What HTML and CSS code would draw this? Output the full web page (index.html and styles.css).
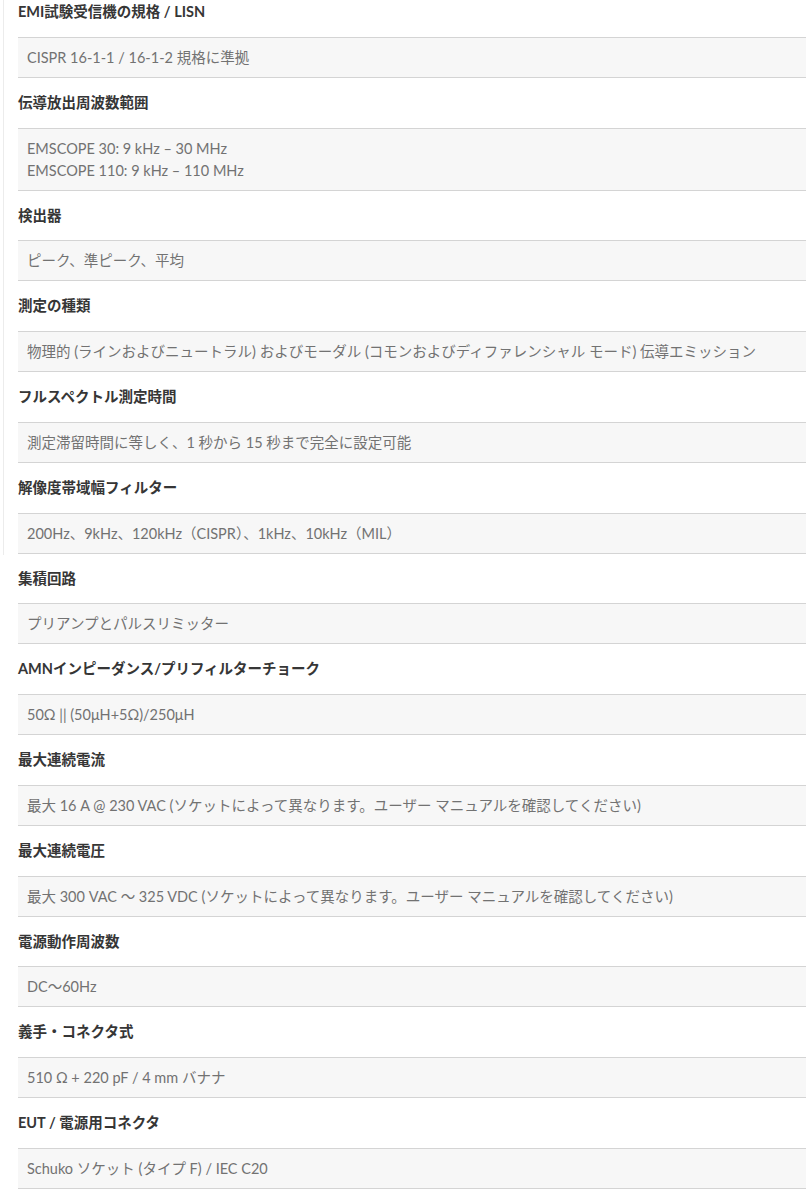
FILE: index.html
```html
<!DOCTYPE html>
<html lang="ja">
<head>
<meta charset="utf-8">
<title>Specs</title>
<link rel="stylesheet" href="styles.css">
</head>
<body>
<div class="page">
  <div class="edge"></div>
  <dl class="spec-list">
    <dt class="spec-head spec-head--first">EMI試験受信機の規格 / LISN</dt>
    <dd class="spec-val">CISPR 16-1-1 / 16-1-2 規格に準拠</dd>
    <dt class="spec-head">伝導放出周波数範囲</dt>
    <dd class="spec-val">EMSCOPE 30: 9 kHz – 30 MHz<br>EMSCOPE 110: 9 kHz – 110 MHz</dd>
    <dt class="spec-head">検出器</dt>
    <dd class="spec-val">ピーク、準ピーク、平均</dd>
    <dt class="spec-head">測定の種類</dt>
    <dd class="spec-val">物理的 (ラインおよびニュートラル) およびモーダル (コモンおよびディファレンシャル モード) 伝導エミッション</dd>
    <dt class="spec-head">フルスペクトル測定時間</dt>
    <dd class="spec-val">測定滞留時間に等しく、1 秒から 15 秒まで完全に設定可能</dd>
    <dt class="spec-head">解像度帯域幅フィルター</dt>
    <dd class="spec-val">200Hz、9kHz、120kHz（CISPR）、1kHz、10kHz（MIL）</dd>
    <dt class="spec-head">集積回路</dt>
    <dd class="spec-val">プリアンプとパルスリミッター</dd>
    <dt class="spec-head">AMNインピーダンス/プリフィルターチョーク</dt>
    <dd class="spec-val">50Ω || (50μH+5Ω)/250μH</dd>
    <dt class="spec-head">最大連続電流</dt>
    <dd class="spec-val">最大 16 A @ 230 VAC (ソケットによって異なります。ユーザー マニュアルを確認してください)</dd>
    <dt class="spec-head">最大連続電圧</dt>
    <dd class="spec-val">最大 300 VAC ～ 325 VDC (ソケットによって異なります。ユーザー マニュアルを確認してください)</dd>
    <dt class="spec-head">電源動作周波数</dt>
    <dd class="spec-val">DC～60Hz</dd>
    <dt class="spec-head">義手・コネクタ式</dt>
    <dd class="spec-val">510 Ω + 220 pF / 4 mm バナナ</dd>
    <dt class="spec-head">EUT / 電源用コネクタ</dt>
    <dd class="spec-val">Schuko ソケット (タイプ F) / IEC C20</dd>
  </dl>
</div>
</body>
</html>
```

FILE: styles.css
```css
html, body {
  margin: 0;
  padding: 0;
  background: #ffffff;
}

body {
  font-family: "Lato", "Noto Sans CJK JP", sans-serif;
  font-size: 14.5px;
  line-height: 22px;
}

.page {
  display: flex;
  align-items: flex-start;
  overflow: hidden;
}

.edge {
  flex: 0 0 3px;
  height: 555px;
  border-right: 1px solid #ececec;
}

.spec-list {
  flex: 1;
  margin: 0 0 0 14px;
  padding: 0;
}

.spec-head {
  padding: 13.875px 0;
  font-weight: 700;
  color: #363636;
}

.spec-head--first {
  padding-top: 1px;
}

.spec-val {
  margin: 0;
  padding: 9px 10px 8px 9px;
  background: #f7f7f7;
  border-top: 1px solid #d4d4d4;
  border-bottom: 1px solid #d4d4d4;
  color: #727272;
  white-space: nowrap;
}
```
